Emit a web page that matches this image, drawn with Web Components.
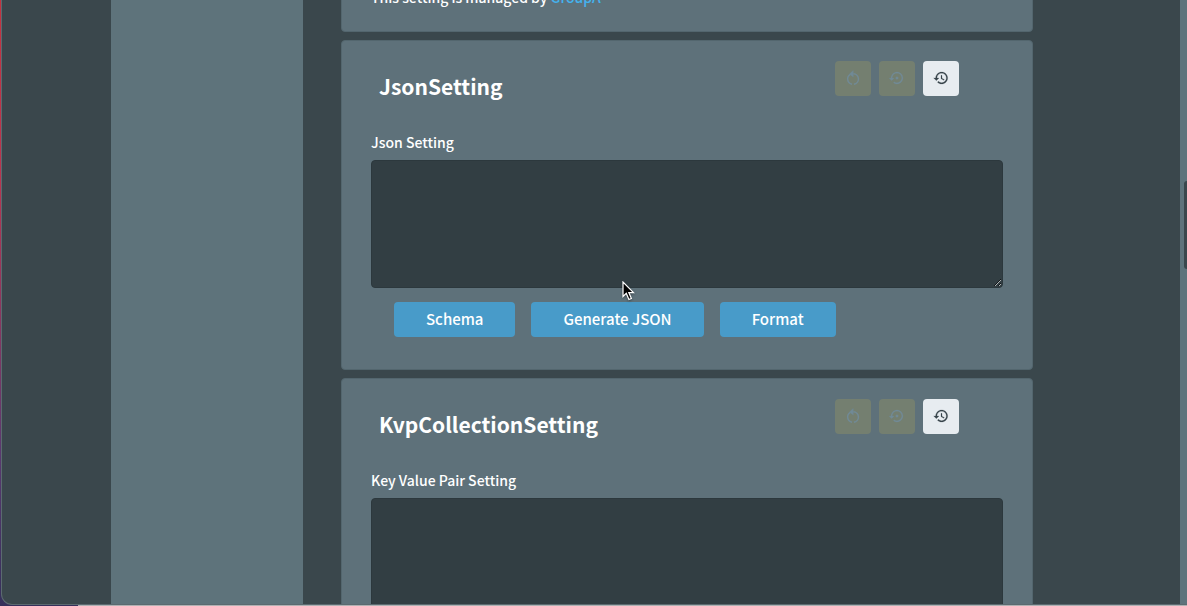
<!DOCTYPE html>
<html lang="en">
<head>
<meta charset="utf-8">
<title>Settings</title>
<style>
  html, body { height: 100%; }
  body {
    margin: 0;
    overflow: hidden;
    background: #2f2b4d;
    color: #fff;
    font-family: "Noto Sans CJK JP", "Noto Sans CJK SC", sans-serif;
  }
</style>
</head>
<body>
<settings-window>
  <settings-card>
    <managed-note>This setting is managed by <a href="#group" slot="link">GroupA</a></managed-note>
  </settings-card>
  <settings-card heading="JsonSetting">
    <text-setting label="Json Setting"></text-setting>
    <button-row>
      <action-button>Schema</action-button>
      <action-button>Generate JSON</action-button>
      <action-button>Format</action-button>
    </button-row>
  </settings-card>
  <settings-card heading="KvpCollectionSetting">
    <text-setting label="Key Value Pair Setting"></text-setting>
  </settings-card>
</settings-window>
<mouse-pointer></mouse-pointer>

<script>
const ICONS = {
  reset: '<path d="M12.500 .5L6.500 6l6 5z"/><path d="M8 6.600A8 8 0 0 0 10.600 21.400M13.400 21.400A8 8 0 0 0 12.500 5.500" fill="none" stroke="currentColor" stroke-width="2.200"/>',
  restore: '<path d="M14 12c0-1.100-.9-2-2-2s-2 .9-2 2 .9 2 2 2 2-.9 2-2zm-2-9c-4.970 0-9 4.030-9 9H0l4 4 4-4H5c0-3.870 3.130-7 7-7s7 3.130 7 7-3.130 7-7 7c-1.510 0-2.910-.490-4.060-1.300l-1.420 1.440C8.040 20.300 9.940 21 12 21c4.970 0 9-4.030 9-9s-4.030-9-9-9z"/>',
  history: '<path d="M13 3c-4.970 0-9 4.030-9 9H1l3.890 3.890.070.140L9 12H6c0-3.870 3.130-7 7-7s7 3.130 7 7-3.130 7-7 7c-1.930 0-3.680-.790-4.940-2.060l-1.420 1.420C8.270 19.990 10.510 21 13 21c4.970 0 9-4.030 9-9s-4.030-9-9-9zm-1 5v5l4.280 2.540.720-1.210-3.500-2.080V8H12z"/>'
};

function define(name, html, setup) {
  const template = document.createElement('template');
  template.innerHTML = html;
  customElements.define(name, class extends HTMLElement {
    constructor() {
      super();
      this.attachShadow({ mode: 'open' }).append(template.content.cloneNode(true));
    }
    connectedCallback() {
      if (setup) setup(this, this.shadowRoot);
    }
  });
}

define('icon-button', `
  <style>
    :host { display: block; }
    button {
      display: grid; place-items: center;
      width: 36px; height: 35px; padding: 0 0 1px;
      border: 0; border-radius: 4px;
      background: #e7ecf0; color: #37444a;
    }
    button:disabled { background: #747f70; color: #718a96; }
    svg { width: 16px; height: 16px; fill: currentColor; display: block; stroke: currentColor; stroke-width: .3; }
  </style>
  <button type="button"><svg viewBox="0 0 24 24" aria-hidden="true"></svg></button>`,
  (host, root) => {
    const button = root.querySelector('button');
    button.setAttribute('aria-label', host.getAttribute('label'));
    button.disabled = host.hasAttribute('disabled');
    root.querySelector('svg').innerHTML = ICONS[host.getAttribute('icon')];
  });

define('action-button', `
  <style>
    :host { display: block; }
    button {
      height: 35px; padding: 0 32px 2px;
      border: 0; border-radius: 4px;
      background: #489bc9; color: #fff;
      font: 500 15px/33px "Noto Sans CJK JP", sans-serif;
    }
  </style>
  <button type="button"><slot></slot></button>`);

define('button-row', `
  <style>
    :host { display: flex; gap: 16px; padding: 14px 23px 0; }
  </style>
  <slot></slot>`);

define('text-setting', `
  <style>
    :host { display: block; }
    label { display: block; font-size: 14px; font-weight: 500; line-height: 24px; margin-bottom: 6px; }
    textarea {
      display: block; box-sizing: border-box; width: 100%; height: 128px;
      margin: 0; padding: 8px; resize: vertical;
      border: 1px solid #2c383d; border-radius: 4px;
      background: #323e43; color: #fff; font: inherit; outline: 0;
    }
  </style>
  <label for="value"></label>
  <textarea id="value"></textarea>`,
  (host, root) => { root.querySelector('label').textContent = host.getAttribute('label'); });

define('managed-note', `
  <style>
    :host { display: block; font-size: 14px; font-weight: 500; line-height: 24px; }
    ::slotted(a) { color: #44b2ee; text-decoration: none; }
  </style>
  <slot></slot><slot name="link"></slot>`);

define('card-header', `
  <style>
    :host { display: flex; justify-content: space-between; align-items: flex-start; padding: 20px 44px 0 8px; margin-bottom: 28px; }
    h2 { margin: 9px 0 0; font-size: 21px; line-height: 32px; font-weight: 700; }
    div { display: flex; gap: 8px; }
  </style>
  <h2></h2>
  <div>
    <icon-button icon="reset" label="Reset" disabled></icon-button>
    <icon-button icon="restore" label="Restore default" disabled></icon-button>
    <icon-button icon="history" label="History"></icon-button>
  </div>`,
  (host, root) => { root.querySelector('h2').textContent = host.getAttribute('heading'); });

define('settings-card', `
  <style>
    :host { display: block; }
    section {
      padding: 0 29px 32px;
      border: 1px solid #53666e; border-radius: 4px;
      background: #5e717a;
    }
    section.plain { padding-bottom: 22px; }
  </style>
  <section><slot></slot></section>`,
  (host, root) => {
    const section = root.querySelector('section');
    const heading = host.getAttribute('heading');
    if (!heading) { section.className = 'plain'; return; }
    const header = document.createElement('card-header');
    header.setAttribute('heading', heading);
    section.prepend(header);
  });

define('scroll-track', `
  <style>
    :host { display: grid; grid-template-rows: 181fr 88px 335fr; width: 7px; background: #5e737c; }
    i { grid-row: 2; margin-left: 4px; border-radius: 4px 0 0 4px; background: #3a474d; }
  </style>
  <i></i>`);

define('settings-window', `
  <style>
    :host {
      display: block; box-sizing: border-box; height: 100vh; padding: 0 0 1px 1px;
      background:
        linear-gradient(#b0b1b3, #b0b1b3) 78px 100% / 100% 1px no-repeat,
        linear-gradient(#c4323f 0, #b83550 30%, #59386f 75%, #35305a 100%);
    }
    .frame {
      display: flex; box-sizing: border-box; height: 100%; overflow: hidden;
      border: solid #5b6a70; border-width: 0 0 1px 1px;
      border-bottom-left-radius: 11px;
      background: #3a474c;
    }
    nav { flex: 0 0 192px; margin-left: 109px; background: #5e737b; }
    main { flex: 1; padding: 0 147px 0 38px; }
    .list { display: flex; flex-direction: column; gap: 8px; margin-top: -16px; }
  </style>
  <div class="frame">
    <nav aria-label="Sections"></nav>
    <main><div class="list"><slot></slot></div></main>
    <scroll-track></scroll-track>
  </div>`);

define('mouse-pointer', `
  <style>
    :host { position: absolute; left: 622px; top: 281px; pointer-events: none; }
    svg { display: block; filter: drop-shadow(0 1px 1px #0006); }
  </style>
  <svg width="13" height="20" viewBox="0 0 13 20" aria-hidden="true">
    <path d="M1 1v14.500l3.300-3.100 2.600 6.100 2.500-1-2.600-5.900h4.700z" fill="#000" stroke="#fff" stroke-width="1.200"/>
  </svg>`);
</script>
</body>
</html>
